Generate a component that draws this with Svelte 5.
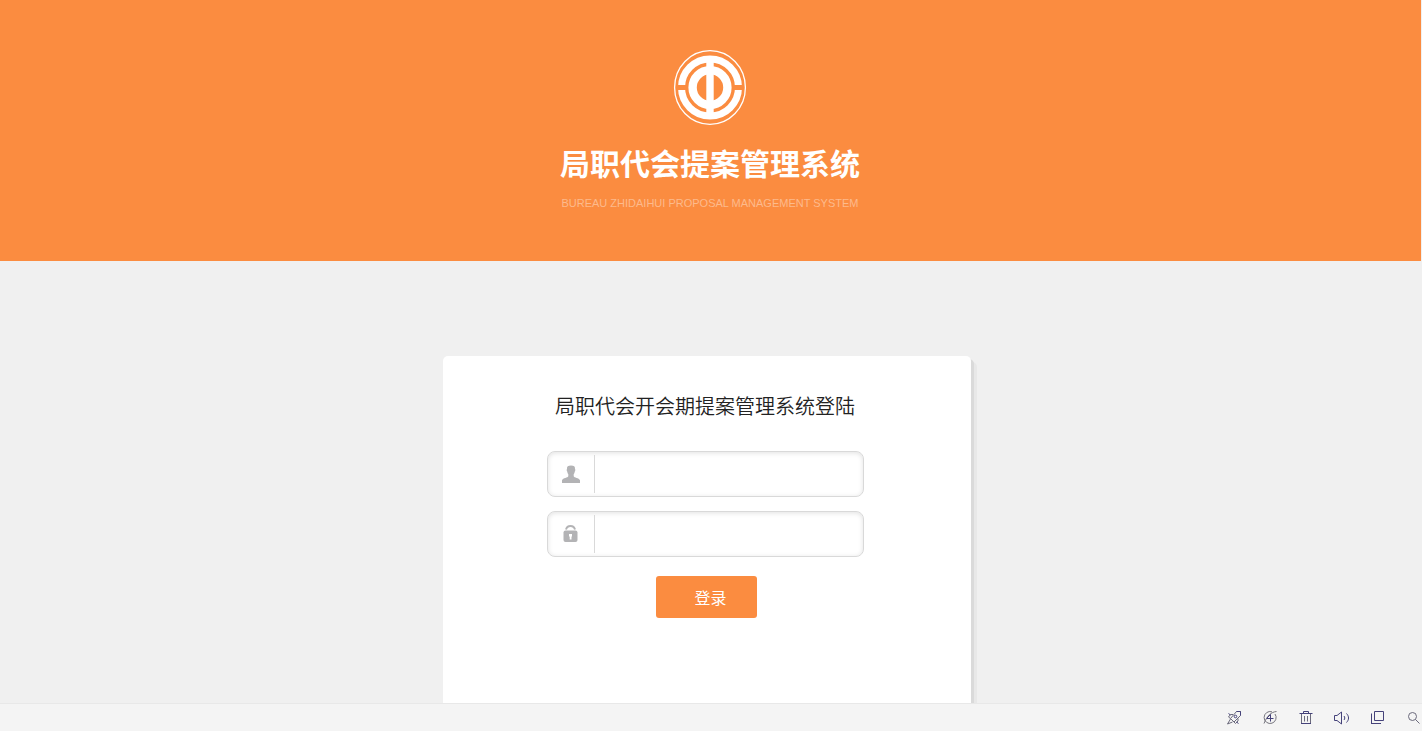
<script>
  let username = $state("");
  let password = $state("");

  const tools = [
    { name: "加速", icon: "rocket" },
    { name: "刷新", icon: "boost" },
    { name: "清理", icon: "trash" },
    { name: "声音", icon: "sound" },
    { name: "窗口", icon: "window" },
    { name: "缩放", icon: "search" },
  ];

  function login(event) {
    event.preventDefault();
  }
</script>

<div class="page">
  <header class="banner">
    <svg class="logo" width="74" height="76" viewBox="-37 -37.5 74 76" aria-hidden="true">
      <ellipse rx="35.4" ry="36.8" fill="none" stroke="#fff" stroke-width="1.3" />
      <circle r="28.5" fill="none" stroke="#fff" stroke-width="7" />
      <path d="M-34 0H-23M23 0H34" stroke="#fb8c40" stroke-width="5" />
      <circle r="17.4" fill="none" stroke="#fff" stroke-width="8.4" />
      <path d="M0 -31V31" stroke="#fff" stroke-width="7.4" />
    </svg>
    <h1>局职代会提案管理系统</h1>
    <p>BUREAU ZHIDAIHUI PROPOSAL MANAGEMENT SYSTEM</p>
  </header>

  <main>
    <form class="card" onsubmit={login}>
      <h2>局职代会开会期提案管理系统登陆</h2>
      <div class="field">
        <label for="username" aria-label="用户名">
          <svg width="18" height="18" viewBox="0 0 18 18" fill="#b3b3b5">
            <path d="M5 4C4.800 1.400 6 .500 9 .500s4.200.9 4 3.500c.5.2.4 1.900-.2 2.500-.3 1.500-.6 2.200-1.100 2.800v2c.4 1.400 5.300 1.600 6.300 4V18H0v-2.700c1-2.400 5.900-2.600 6.300-4v-2C5.800 8.700 5.500 8 5.200 6.500 4.600 5.900 4.500 4.200 5 4z" />
          </svg>
        </label>
        <input id="username" type="text" bind:value={username} />
      </div>
      <div class="field">
        <label for="password" aria-label="密码">
          <svg width="18" height="18" viewBox="0 0 18 18">
            <path d="M4 4.500C4.600 2.200 6.200 1 8.500 1S12.400 2.200 13 4.500" fill="none" stroke="#b3b3b5" stroke-width="2" />
            <rect x="1.500" y="5.500" width="14" height="11.500" rx="2" fill="#b3b3b5" />
            <path d="M7 9h3v2.500h-.5v3H7.700v-3H7z" fill="#fff" />
          </svg>
        </label>
        <input id="password" type="password" bind:value={password} />
      </div>
      <button class="submit" type="submit">登录</button>
    </form>
  </main>

  <footer class="toolbar">
    {#each tools as tool (tool.icon)}
      <button type="button" aria-label={tool.name}>
        <svg width="16" height="16" viewBox="0 0 16 16">
          {#if tool.icon === "rocket"}
            <path d="M10.500 1.500h4v4L8 12 4.500 8.500zM7 4.500H4.500L2.500 7l2 1.500M12 8.500V11l-2.500 2.500L8 12M4.500 9l-3 5L6.500 12" stroke="#6b6a7c" />
            <path d="M10.500 1.500h4v4M2.500 3.500l2 1.500M10.500 12l2 1.500" />
            <circle cx="9.500" cy="6.500" r="1.300" />
          {:else if tool.icon === "boost"}
            <path d="M13 4a6 6 0 1 1-3-2.200M14.500 1.500C9 2 5 6 2 13.500" stroke="#77767f" />
            <path d="M4.500 8.500h7M8.500 4.500v7M5 8l3.500-3.500" />
          {:else if tool.icon === "trash"}
            <path d="M3.500 3.500v10h9v-10M6.500 6v5.500M9.500 6v5.500" stroke="#6b6a7c" />
            <path d="M1.500 3.500h13M5.500 3.500v-2h5v2M3 13.500h10" />
          {:else if tool.icon === "sound"}
            <path d="M.500 5.500H3L7.500 2v12L3 10.500H.500z" />
            <path d="M10 6c1 1.200 1 2.800 0 4M12.500 3.500c2.700 2.800 2.700 6.200 0 9" />
          {:else if tool.icon === "window"}
            <path d="M4.500 1.500h9v9h-9zM1.500 3.500v10M1 13.500h10" />
          {:else}
            <g stroke="#6b6a7c">
              <circle cx="6.500" cy="6.500" r="4" />
              <path d="M9.500 9.500l4 4" />
            </g>
          {/if}
        </svg>
      </button>
    {/each}
  </footer>
</div>

<style>
  :global(body) {
    margin: 0;
    background: #f0f0f0;
  }

  .page {
    display: flex;
    flex-direction: column;
    height: 100vh;
    overflow: hidden;
    font-family: "Liberation Sans", "Noto Sans CJK SC", sans-serif;
  }

  .banner {
    display: flex;
    flex-direction: column;
    align-items: center;
    flex-shrink: 0;
    margin-right: 1px;
    padding: 50px 1px 49px 0;
    background: #fb8c40;
    color: #fff;
  }

  .logo {
    display: block;
  }

  h1 {
    margin: 17px 0 0;
    font-size: 30px;
    font-weight: 700;
    line-height: 44px;
  }

  .banner p {
    margin: 8px 0 0;
    color: #fdba8c;
    font-size: 11px;
    line-height: 17px;
  }

  main {
    display: flex;
    flex: 1;
    justify-content: center;
    min-height: 0;
    padding: 95px 8px 0 0;
    overflow: hidden;
  }

  .card {
    display: flex;
    flex-direction: column;
    align-items: center;
    box-sizing: border-box;
    width: 528px;
    height: 400px;
    padding: 35px 4px 0 0;
    border-radius: 5px;
    background: #fff;
    box-shadow:
      3px 3px 0 #dadada,
      6px 6px 0 #e8e8e8;
  }

  h2 {
    margin: 0 0 28px;
    color: #222;
    font-size: 20px;
    font-weight: 350;
    line-height: 32px;
  }

  .field {
    display: flex;
    align-items: center;
    box-sizing: border-box;
    width: 317px;
    height: 46px;
    margin-bottom: 14px;
    border: 1px solid #d9d9d9;
    border-radius: 8px;
    box-shadow: inset 0 1px 5px rgba(0, 0, 0, 0.12);
  }

  .field label {
    display: flex;
    align-items: center;
    justify-content: center;
    width: 46px;
    height: 38px;
    border-right: 1px solid #d9d9d9;
  }

  .field input {
    flex: 1;
    min-width: 0;
    height: 38px;
    padding: 0 10px;
    border: 0;
    outline: 0;
    background: transparent;
    font-size: 16px;
  }

  .submit {
    width: 101px;
    height: 42px;
    margin: 5px 0 0 3px;
    padding: 0 0 0 8px;
    border: 0;
    border-radius: 3px;
    background: #fb8c40;
    color: #fff;
    font-family: inherit;
    font-size: 16px;
    cursor: pointer;
  }

  .toolbar {
    display: flex;
    flex-shrink: 0;
    align-items: center;
    justify-content: flex-end;
    gap: 20px;
    height: 27px;
    border-top: 1px solid #e8e8e8;
    background: #f4f4f4;
  }

  .toolbar button {
    width: 16px;
    height: 16px;
    padding: 0;
    border: 0;
    background: none;
    cursor: pointer;
  }

  .toolbar svg {
    display: block;
    fill: none;
    stroke: #45427a;
    stroke-width: 1;
  }
</style>
